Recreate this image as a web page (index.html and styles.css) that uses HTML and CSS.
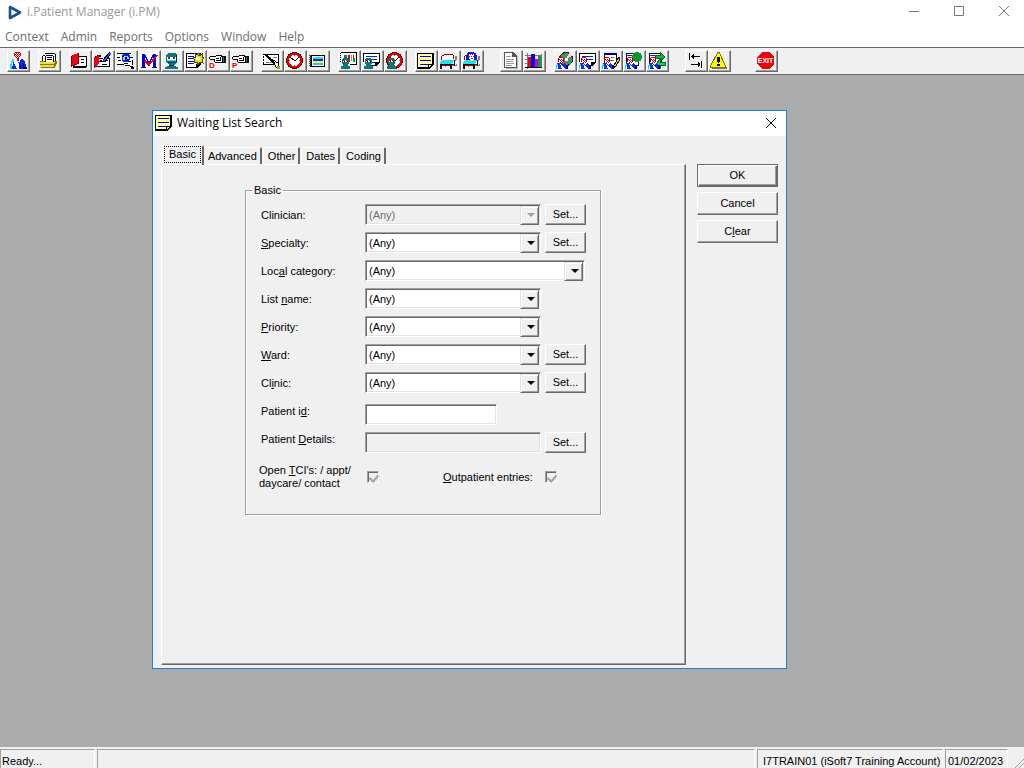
FILE: index.html
```html
<!DOCTYPE html>
<html lang="en">
<head>
<meta charset="utf-8">
<title>i.Patient Manager (i.PM)</title>
<link rel="stylesheet" href="styles.css">
</head>
<body>
<svg class="defs" aria-hidden="true">
  <defs>
    <symbol id="doctor" viewBox="0 0 12 12">
      <path d="M3 0h4v1h1v4H7v1H4V5H3z" fill="#fff"/>
      <path d="M3 0h4v1H3zM3 2h1v1H3zM5 2h1v1H5zM4 3h1v1H4zM6 3h1v1H6zM5 4h1v1H5zM4 5h1v1H4zM6 5h1v1H6z" fill="#e00000"/>
      <path d="M2 1h1v4H2zM7 1h1v4H7z" fill="#a00000"/>
      <path d="M1 6h3l2 2 2-2 3 3v3H1z" fill="#1030f0"/>
      <path d="M4 7h1l4 5H6z" fill="#fff"/>
      <path d="M1 7h1v2H1zM0 8h1v4H0z" fill="#00d8f0"/>
      <path d="M1 9h1v3H1z" fill="#fff"/>
      <path d="M10 8h2v4h-2z" fill="#000080"/>
    </symbol>
    <symbol id="masked" viewBox="0 0 10 11">
      <path d="M2 0h5v1h1v5H7v1H2V6H1V1h1z" fill="#087878"/>
      <path d="M2 2h5v2H2z" fill="#fff"/>
      <path d="M2 2h2v1H2zM5 2h2v1H5z" fill="#e00000"/>
      <path d="M3 3h1v1H3zM6 3h1v1H6z" fill="#000"/>
      <path d="M0 8h2V7h5v1h2v3H0z" fill="#087878"/>
    </symbol>
    <symbol id="hand" viewBox="0 0 18 18">
      <path d="M1 5h6l1-1h6v6H7V8H1z" fill="#fff"/>
      <path d="M0 5h1v2H0zM1 4h6v1H1zM1 7h5v1H1zM7 3h6v1H7zM12 4h2v1h-2zM5 8h1v2H5zM6 10h8v1H6zM7 6h3v1H7zM7 8h4v1H7zM11 5h1v4h-1zM13 5h1v5h-1z" fill="#000"/>
      <path d="M14 4h3v7h-3z" fill="#111"/>
      <path d="M14 5h1v5h-1z" fill="#087878"/>
    </symbol>
    <symbol id="note" viewBox="0 0 18 18">
      <path d="M1 2h15v10l-4 4H1z" fill="#ffffa0"/>
      <path d="M0 1h16v1H0zM0 1h1v15H0zM15 1h2v11h-2zM0 15h11v2H0zM11 12h6l-5 5h-1z" fill="#000"/>
      <path d="M12 13h2l-2 2z" fill="#ffffa0"/>
      <path d="M3 4h11v1H3zM3 8h11v1H3zM3 12h8v1H3z" fill="#0000f0"/>
    </symbol>
    <symbol id="clock" viewBox="0 0 18 18">
      <circle cx="8.5" cy="8.5" r="8.5" fill="#600"/>
      <circle cx="8.5" cy="8.5" r="7.5" fill="#e80000"/>
      <circle cx="8.5" cy="8.5" r="5.6" fill="#fff"/>
      <path d="M4 5l5 4 4-4" fill="none" stroke="#000"/>
      <path d="M8 3h1v1H8zM8 13h1v1H8zM3 8h1v1H3zM13 8h1v1h-1z" fill="#666"/>
    </symbol>
    <symbol id="bed" viewBox="0 0 18 18">
      <path d="M15 4h2v3l-2 2zM3 15l3-1h11v-3l-2 2z" fill="#808080"/>
      <path d="M3 3h11v4l-2 2H2V5z" fill="#fff"/>
      <path d="M4 2h9v1H4zM2 3h2v1H2zM1 4h1v4H1zM13 3h1v4h-1z" fill="#900"/>
      <path d="M2 8h12l-2 4H0v-2z" fill="#20e0e8"/>
      <path d="M0 12h12v1H0zM14 8h1v2h-1zM0 13h2v4H0zM10 13h2v4h-2zM14 10h1v4h-1z" fill="#111"/>
      <path d="M2 13h8v1H2zM12 12h2v1h-2z" fill="#a00000"/>
    </symbol>
  </defs>
</svg>

<div class="app">
  <header class="titlebar">
    <svg class="logo" viewBox="0 0 14 15" aria-hidden="true"><path d="M2 2l10 5.5L2 13z" fill="#fff" stroke="#1c4f91" stroke-width="2.6" stroke-linejoin="round"/></svg>
    <h1 class="app-title">i.Patient Manager (i.PM)</h1>
    <div class="window-controls">
      <button class="control" aria-label="Minimize"><svg viewBox="0 0 12 12"><path d="M1 5.5h10"/></svg></button>
      <button class="control" aria-label="Maximize"><svg viewBox="0 0 12 12"><path d="M1.500 .500h9v9h-9z"/></svg></button>
      <button class="control" aria-label="Close"><svg viewBox="0 0 12 12"><path d="M1 0l10 10M11 0L1 10"/></svg></button>
    </div>
  </header>

  <nav class="menubar">
    <button class="menu">Context</button>
    <button class="menu">Admin</button>
    <button class="menu">Reports</button>
    <button class="menu">Options</button>
    <button class="menu">Window</button>
    <button class="menu">Help</button>
  </nav>

  <div class="toolbar" role="toolbar">
    <div class="group">
      <button class="tool" aria-label="Patient"><svg viewBox="0 0 18 18">
        <path d="M6 0h5v6l-2 2-3-2z" fill="#fff"/>
        <path d="M6 0h5v1H6zM5 1h1v3H5zM11 1h1v3h-1zM7 1h1v1H7zM9 1h1v1H9zM6 2h1v1H6zM8 2h1v1H8zM10 2h1v1h-1zM7 3h1v1H7zM9 3h1v1H9zM6 4h1v1H6zM8 4h1v1H8zM10 4h1v1h-1zM7 5h1v1H7zM9 5h1v1H9z" fill="#d80000"/>
        <path d="M4 7h3l3 4 2-4 3 1 2 5v4H3z" fill="#0828e8"/>
        <path d="M5 7h4v3l1 2v5H8l-3-6z" fill="#fff"/>
        <path d="M8 6h2v3H8z" fill="#d80000"/>
        <path d="M3 7h2v3H3zM2 9h1v3H2zM1 12h2v5H1z" fill="#20d8f0"/>
        <path d="M3 10h1v4H3z" fill="#fff"/><path d="M14 12h1v3h3v2h-4zM11 13h1v4h-1z" fill="#000080"/>
      </svg></button>
    </div>
    <div class="group">
      <button class="tool" aria-label="Print"><svg viewBox="0 0 18 18">
        <path d="M4 2h11v8H2V4h2z" fill="#fff"/>
        <path d="M5 1h10v1H5zM15 2h1v8h-1zM2 4h1v6H2zM3 3h2v1H3zM5 4h1v6H5zM6 3h7v1H6zM13 4h1v6h-1zM7 5h5v1H7zM7 7h5v1H7z" fill="#000"/>
        <path d="M0 9h5v1h9V9h3v3l-2 4H0z" fill="#e8e040"/>
        <path d="M0 9h5v1H0zM14 9h3v3h-1l-1 4H1v-1h13v-4h1v-1h-1zM0 12h14v1H0z" fill="#807c00"/>
      </svg></button>
    </div>
    <div class="group">
      <button class="tool" aria-label="Open record"><svg viewBox="0 0 18 18">
        <path d="M8 4h7v10H8z" fill="#fff"/>
        <path d="M8 4h8v11H2v-1h13V5H8zM10 7h3v1h-3zM10 10h3v1h-3zM2 15h13v1H2z" fill="#000"/>
        <path d="M0 4l7-3v10l-7 4z" fill="#f00018"/>
        <path d="M0 4h1v11H0zM7 1h1v11H7zM1 14l6-3v1l-5 3z" fill="#800000"/>
      </svg></button>
      <button class="tool" aria-label="Edit record"><svg viewBox="0 0 18 18">
        <path d="M6 6h9v9H6z" fill="#fff"/>
        <path d="M6 6h3v1H6zM12 6h4v9H2v-1h13V7h-3zM8 9h3v1H8zM8 12h5v1H8z" fill="#000"/>
        <path d="M0 5l5-2v9l-5 4z" fill="#e80018"/><path d="M5 3h2v2H5zM5 6h2v1H5zM5 9h2v1H5zM0 14h5v1H0zM1 4h1v1H1zM3 3h1v1H3z" fill="#400"/>
        <path d="M16 0l-6 7-1 2 3-1 5-6z" fill="#3458d0"/><path d="M16 0l-7 8M12 8l4-5M6 8l3 2 5-2" fill="none" stroke="#000040"/>
      </svg></button>
      <button class="tool" aria-label="Find"><svg viewBox="0 0 18 18">
        <path d="M0 1h14v12H0z" fill="#fff"/>
        <path d="M0 1h14v1H0zM0 5h3v1H0zM1 8h3v1H1zM0 12h7v1H0zM13 5h3v1h-3z" fill="#000"/>
        <path d="M6 2h6v1h1v6h-1v1H6V9H5V3h1z" fill="#0828d8"/><path d="M7 4h4v1h1v2H8v1H6V5h1z" fill="#9ce"/><path d="M8 5h2v2H8z" fill="#003"/>
        <path d="M7 12l6-4h3v6l-2 1H9z" fill="#fff"/><path d="M7 11h4v1H7zM11 9h3v1h-3zM15 8h1v5h-1zM8 13h5v1H8zM13 14h3v1h-3zM14 15h3v2h-3z" fill="#000"/>
      </svg></button>
      <button class="tool" aria-label="Merge"><svg viewBox="0 0 18 18">
        <path d="M0 0h17v17H0z" fill="#fff"/>
        <path d="M2 2h3v14H2zM13 2h3v14h-3zM5 3h1v3H5zM6 5h1v3H6zM7 7h1v3H7zM8 9h2v2H8zM10 7h1v3h-1zM11 5h1v3h-1zM12 3h1v3h-1zM1 15h5v1H1zM12 15h5v1h-5z" fill="#0000e8"/>
        <path d="M5 9l4 4 8-10" fill="none" stroke="#f00000" stroke-width="1.500"/>
      </svg></button>
      <button class="tool" aria-label="Theatre"><svg viewBox="0 0 18 18">
        <path d="M0 0h17v12H0z" fill="#eee"/>
        <path d="M5 1h7l2 2v7l-3 3H6l-3-3V3z" fill="#087878"/>
        <path d="M4 5h9v3H4z" fill="#fff"/><path d="M5 5h2v1H5zM10 5h2v1h-2z" fill="#e80000"/><path d="M5 6h2v1H5zM10 6h2v1h-2zM5 10h7v1H5z" fill="#0030a0"/>
        <path d="M4 8h9v1H4z" fill="#70c0c0"/><path d="M2 15l4-1v-2h5v2l4 1v2H2z" fill="#087878"/><path d="M6 13h5v1H6zM13 3h1v7h-1z" fill="#033"/>
      </svg></button>
      <button class="tool" aria-label="New entry"><svg viewBox="0 0 18 18">
        <path d="M1 2h13v10l-3 3H1z" fill="#fff"/><path d="M0 1h15v11l-4 4H0zM1 2v13h9v-3h4V2z" fill="#000" fill-rule="evenodd"/>
        <path d="M2 4h6v1H2zM2 6h5v1H2zM2 9h6v1H2zM2 11h6v1H2z" fill="#0000e0"/>
        <path d="M11 1h2v3l3-2v3l2 1-2 2 1 3-3-1-2 3-1-3-3 1 1-3-2-2 3-1-1-3 3 1z" fill="#e8e000" stroke="#4a4600"/><path d="M10 5h4v3h-4z" fill="#fff"/>
      </svg></button>
      <button class="tool" aria-label="Discharge"><svg viewBox="0 0 18 18"><use href="#hand" width="18" height="18"/><text x="0" y="16" class="letter">D</text></svg></button>
      <button class="tool" aria-label="Pre-admit"><svg viewBox="0 0 18 18"><use href="#hand" width="18" height="18"/><text x="0" y="16" class="letter">P</text></svg></button>
    </div>
    <div class="group">
      <button class="tool" aria-label="Letter"><svg viewBox="0 0 18 18">
        <path d="M1 3h14v9H1z" fill="#fff"/><path d="M0 2h16v11H0zM1 3v9h14V3z" fill="#000" fill-rule="evenodd"/>
        <path d="M0 3h1v1H0zM0 6h1v1H0zM0 9h1v1H0z" fill="#fff"/><path d="M3 10h6v1H3zM4 5h4v1H4zM10 5h4v1h-4z" fill="#888"/>
        <path d="M3 3l10 10" fill="none" stroke="#000" stroke-width="2"/><path d="M10 8l5 3 1 4h-3z" fill="#fff" stroke="#000"/><path d="M14 14h3v3h-3z" fill="#a8a800"/>
      </svg></button>
      <button class="tool" aria-label="Clock"><svg viewBox="0 0 18 18"><use href="#clock" width="18" height="18"/></svg></button>
      <button class="tool" aria-label="Notebook"><svg viewBox="0 0 18 18">
        <path d="M1 3h15v12H1z" fill="#000"/><path d="M0 3h2v1H0zM0 5h2v1H0zM0 7h2v1H0zM0 9h2v1H0zM0 11h2v1H0zM0 13h2v1H0z" fill="#555"/>
        <path d="M3 4h12v10H3z" fill="#fff"/><path d="M4 5h10v2H4z" fill="#20e0f0"/><path d="M4 7h10v2H4z" fill="#2020f0"/><path d="M4 9h10v2H4z" fill="#f0f040"/><path d="M4 11h10v2H4z" fill="#20c8f0"/>
      </svg></button>
    </div>
    <div class="group">
      <button class="tool" aria-label="Ward view"><svg viewBox="0 0 18 18">
        <path d="M1 1h15v11H1z" fill="#fff"/><path d="M1 0h16v13h-7v-1h6V1H1zM0 1h1v1H0zM0 3h1v1H0zM0 5h1v1H0zM0 7h1v1H0zM0 9h1v1H0z" fill="#000"/>
        <path d="M4 3h3v3H4z" fill="#087878"/><path d="M8 3h2v7H8z" fill="#e00000"/><path d="M11 3h1v6h-1z" fill="#888"/><path d="M13 6h2v4h-2z" fill="#00a000"/><path d="M13 3h1v3h-1z" fill="#e00000"/>
        <use href="#masked" x="1" y="6" width="10" height="11"/>
      </svg></button>
      <button class="tool" aria-label="Clinician list"><svg viewBox="0 0 18 18">
        <path d="M1 2h15v8l-3 3H1z" fill="#fff"/><path d="M0 1h17v9l-4 4H8v-1h4v-3h4V2H1v8H0z" fill="#000"/><path d="M3 4h11v1H3zM6 7h8v1H6zM8 10h4v1H8z" fill="#0020e0"/>
        <use href="#masked" x="1" y="6" width="10" height="11"/>
      </svg></button>
      <button class="tool" aria-label="Clinician schedule"><svg viewBox="0 0 18 18"><use href="#clock" width="18" height="18"/><use href="#masked" x="1" y="6" width="10" height="11"/></svg></button>
    </div>
    <div class="group">
      <button class="tool" aria-label="Waiting list"><svg viewBox="0 0 18 18"><use href="#note" width="18" height="18"/></svg></button>
      <button class="tool" aria-label="Bed"><svg viewBox="0 0 18 18"><use href="#bed" width="18" height="18"/></svg></button>
      <button class="tool" aria-label="Occupied bed"><svg viewBox="0 0 18 18"><use href="#bed" width="18" height="18"/>
        <path d="M5 0h6v1h2v3h1v4H3V4h1V1h1z" fill="#0820d0"/><path d="M6 2h5v5l-2 2-3-2z" fill="#fff"/><path d="M7 2h1v1H7zM9 2h1v1H9zM6 4h1v1H6zM8 4h1v1H8zM10 4h1v1h-1zM8 6h2v1H8z" fill="#e00000"/></svg></button>
    </div>
    <div class="group group--far">
      <button class="tool" aria-label="Document"><svg viewBox="0 0 18 18">
        <path d="M4 4h12v13H4z" fill="#bbb"/><path d="M2 0h9l4 4v12H2z" fill="#fff"/><path d="M2 0h9l4 4v12H2zM3 1v14h11V5h-4V1z" fill="#555" fill-rule="evenodd"/>
        <path d="M4 4h5v1H4zM4 7h8v1H4zM4 9h7v1H4zM4 11h8v1H4zM4 13h6v1H4z" fill="#999"/>
      </svg></button>
      <button class="tool" aria-label="Chart"><svg viewBox="0 0 18 18">
        <path d="M2 1h1v16H2zM0 3h17v1H0zM0 7h17v1H0zM0 11h17v1H0zM16 2h1v14h-1z" fill="#777"/>
        <path d="M3 5h3v11H3z" fill="#e80000"/><path d="M6 2h4v14H6z" fill="#0000f0"/><path d="M10 7h3v9h-3z" fill="#d000d0"/><path d="M13 4h3v12h-3z" fill="#00a040"/><path d="M0 15h17v1H0z" fill="#000"/>
      </svg></button>
    </div>
    <div class="group">
      <button class="tool" aria-label="Patient disc"><svg viewBox="0 0 18 18">
        <circle cx="10" cy="7" r="6.500" fill="#777" stroke="#222"/><path d="M10 7l-4-5 4-1zM10 7l6 2-2 4z" fill="#10b030"/><path d="M10 7l3-6 3 3z" fill="#ddd"/><path d="M9 6h3v3H9z" fill="#fff"/>
        <use href="#doctor" x="0" y="5" width="12" height="12"/></svg></button>
      <button class="tool" aria-label="Patient note"><svg viewBox="0 0 18 18">
        <path d="M1 2h15v9l-3 2H1z" fill="#fff"/><path d="M0 1h17v9l-4 4h-2v-1h1v-3h4V2H1v8H0z" fill="#000"/><path d="M3 4h11v1H3zM7 7h7v1H7z" fill="#0020e0"/>
        <use href="#doctor" x="0" y="5" width="12" height="12"/></svg></button>
      <button class="tool" aria-label="Edit patient"><svg viewBox="0 0 18 18">
        <path d="M2 1h12v12H2z" fill="#fff" stroke="#111"/><path d="M2 1h12v2H2z" fill="#000080"/><path d="M4 5h3v1H4zM9 5h3v1H9zM8 8h4v1H8z" fill="#666"/>
        <path d="M17 5l-5 8-1 3 3-2 4-7z" fill="#e8d020" stroke="#111"/>
        <use href="#doctor" x="0" y="5" width="12" height="12"/></svg></button>
      <button class="tool" aria-label="Patient network"><svg viewBox="0 0 18 18">
        <path d="M1 1h12v12H1z" fill="#fff" stroke="#111"/><path d="M2 3h6v1H2z" fill="#0020e0"/><circle cx="12" cy="5" r="5" fill="#08a030"/><path d="M9 3h1v1H9zM12 2h1v1h-1zM14 4h1v1h-1zM11 5h1v1h-1zM9 7h1v1H9zM13 7h1v1h-1z" fill="#056020"/>
        <use href="#doctor" x="0" y="5" width="12" height="12"/></svg></button>
      <button class="tool" aria-label="Transfer patient"><svg viewBox="0 0 18 18">
        <path d="M1 1h12v12H1z" fill="#fff" stroke="#111"/><path d="M2 3h6v1H2z" fill="#0020e0"/><path d="M7 3h5V0l5 5-5 4V6H7z" fill="#10c020" stroke="#064"/><path d="M17 10h-5V7l-4 5 4 4v-3h5z" fill="#10e020" stroke="#064"/>
        <use href="#doctor" x="0" y="5" width="12" height="12"/></svg></button>
    </div>
    <div class="group group--far">
      <button class="tool" aria-label="Swap"><svg viewBox="0 0 18 18"><path d="M2 1h1v7H2zM4 4h9v1H4zM5 3h1v3H5zM6 2h1v5H6zM14 9h1v7h-1zM4 12h9v1H4zM12 11h1v3h-1zM11 10h1v5h-1z" fill="#000"/></svg></button>
      <button class="tool" aria-label="Alerts"><svg viewBox="0 0 18 18"><path d="M9 2l8 15H2z" fill="#777"/><path d="M8 0h1l7 15H0z" fill="#ffff00" stroke="#777700"/><path d="M7 5h3v4L9 11H8L7 9zM7 12h3v2H7z" fill="#000"/></svg></button>
    </div>
    <div class="group group--farther">
      <button class="tool" aria-label="Exit"><svg viewBox="0 0 18 18"><path d="M5 0h7l5 5v7l-5 5H5l-5-5V5z" fill="#f00008"/><text x="8.500" y="11" text-anchor="middle" class="exit">EXIT</text></svg></button>
    </div>
  </div>

  <main class="desktop">
    <section class="dialog" role="dialog" aria-labelledby="dialog-title">
      <header class="dialog-head">
        <svg class="dialog-icon" viewBox="0 0 18 18" aria-hidden="true"><use href="#note" width="18" height="18"/></svg>
        <h2 class="dialog-title" id="dialog-title">Waiting List Search</h2>
        <button class="dialog-close" aria-label="Close dialog"><svg viewBox="0 0 12 12"><path d="M1 1l10 10M11 1L1 11"/></svg></button>
      </header>
      <form class="dialog-body">
        <div class="tabs">
          <div class="tablist" role="tablist">
            <button type="button" class="tab tab--active" role="tab" aria-selected="true"><span class="focus">Basic</span></button>
            <button type="button" class="tab" role="tab">Advanced</button>
            <button type="button" class="tab" role="tab">Other</button>
            <button type="button" class="tab" role="tab">Dates</button>
            <button type="button" class="tab" role="tab">Coding</button>
          </div>
          <div class="panel" role="tabpanel">
            <fieldset class="box">
              <legend class="legend">Basic</legend>
              <div class="field">
                <label class="label" for="clinician">Clinician:</label>
                <span class="combo combo--off"><select id="clinician" class="select" disabled><option>(Any)</option></select></span>
                <button type="button" class="push">Set...</button>
              </div>
              <div class="field">
                <label class="label" for="specialty"><u>S</u>pecialty:</label>
                <span class="combo"><select id="specialty" class="select"><option>(Any)</option></select></span>
                <button type="button" class="push">Set...</button>
              </div>
              <div class="field">
                <label class="label" for="category">Loc<u>a</u>l category:</label>
                <span class="combo combo--wide"><select id="category" class="select"><option>(Any)</option></select></span>
              </div>
              <div class="field">
                <label class="label" for="listname">List <u>n</u>ame:</label>
                <span class="combo"><select id="listname" class="select"><option>(Any)</option></select></span>
              </div>
              <div class="field">
                <label class="label" for="priority"><u>P</u>riority:</label>
                <span class="combo"><select id="priority" class="select"><option>(Any)</option></select></span>
              </div>
              <div class="field">
                <label class="label" for="ward"><u>W</u>ard:</label>
                <span class="combo"><select id="ward" class="select"><option>(Any)</option></select></span>
                <button type="button" class="push">Set...</button>
              </div>
              <div class="field">
                <label class="label" for="clinic">Cl<u>i</u>nic:</label>
                <span class="combo"><select id="clinic" class="select"><option>(Any)</option></select></span>
                <button type="button" class="push">Set...</button>
              </div>
              <div class="field field--text field--first">
                <label class="label" for="pid">Patient i<u>d</u>:</label>
                <input id="pid" class="text" type="text">
              </div>
              <div class="field field--text">
                <label class="label" for="details">Patient <u>D</u>etails:</label>
                <input id="details" class="text text--off" type="text" disabled>
                <button type="button" class="push">Set...</button>
              </div>
              <div class="checks">
                <label class="check-label" for="open">Open <u>T</u>CI's: / appt/<br>daycare/ contact</label>
                <input id="open" class="check" type="checkbox" checked disabled>
                <label class="check-label check-label--second" for="outpatient"><u>O</u>utpatient entries:</label>
                <input id="outpatient" class="check" type="checkbox" checked disabled>
              </div>
            </fieldset>
          </div>
        </div>
        <div class="actions">
          <button type="button" class="push push--default">OK</button>
          <button type="button" class="push">Cancel</button>
          <button type="button" class="push">C<u>l</u>ear</button>
        </div>
      </form>
    </section>
  </main>

  <footer class="status">
    <span class="cell cell--ready">Ready...</span>
    <span class="cell cell--grow"></span>
    <span class="cell cell--account">I7TRAIN01 (iSoft7 Training Account)</span>
    <span class="cell cell--date">01/02/2023</span>
    <svg class="grip" viewBox="0 0 14 19" aria-hidden="true"><path d="M5 19l9-9M9 19l5-5" stroke="#999" fill="none"/></svg>
  </footer>
</div>
</body>
</html>
```

FILE: styles.css
```css
* { box-sizing: border-box; }

body {
  margin: 0;
  font: 11px/13px "Liberation Sans", Arial, sans-serif;
  color: #000;
}

button, input, select { font: inherit; color: inherit; }
button { padding: 0; border: 0; background: none; }
.defs { position: absolute; width: 0; height: 0; }

.app {
  display: flex;
  flex-direction: column;
  height: 100vh;
  overflow: hidden;
  background: #f0f0f0;
}

/* Main window */
.titlebar {
  display: flex;
  align-items: center;
  height: 24px;
  padding-left: 8px;
  background: #fff;
}
.logo { width: 14px; height: 15px; }
.app-title {
  flex: 1;
  margin: 0 0 0 5px;
  font: 12px/16px "Open Sans", sans-serif;
  color: #999;
}
.window-controls { display: flex; padding-right: 14px; gap: 33px; }
.control { width: 12px; height: 12px; }
.control svg { display: block; fill: none; stroke: #777; }

.menubar {
  display: flex;
  gap: 12px;
  height: 23px;
  padding: 4px 5px 0;
  background: #fff;
}
.menu {
  height: 17px;
  font: 12px/17px "Open Sans", sans-serif;
  color: #6d6d6d;
}

.toolbar {
  display: flex;
  gap: 8px;
  height: 28px;
  padding: 2px 7px;
  border-top: 1px solid #696969;
  border-bottom: 1px solid #696969;
}
.group { display: flex; }
.group--far { margin-left: 8px; }
.group--farther { margin-left: 16px; }
.tool {
  width: 23px;
  height: 22px;
  padding: 1px;
  border: 1px solid;
  border-color: #fff #696969 #696969 #fff;
  box-shadow: inset -1px -1px #a0a0a0;
}
.tool svg { display: block; width: 18px; height: 18px; shape-rendering: crispEdges; }
.letter { font: bold 8px "Liberation Sans", sans-serif; fill: #e80000; }
.exit { font: bold 7px "Liberation Sans", sans-serif; fill: #fff; }

.desktop { position: relative; flex: 1; background: #ababab; }

/* Dialog */
.dialog {
  position: absolute;
  top: 35px;
  left: 152px;
  width: 635px;
  border: 1px solid #1883d7;
  background: #f0f0f0;
}
.dialog-head {
  display: flex;
  align-items: center;
  height: 25px;
  padding: 0 9px 2px 2px;
  background: #fff;
}
.dialog-icon { width: 18px; height: 18px; shape-rendering: crispEdges; }
.dialog-title {
  flex: 1;
  margin: 0 0 0 4px;
  font: 12px/16px "Open Sans", sans-serif;
}
.dialog-close { width: 12px; height: 12px; }
.dialog-close svg { display: block; fill: none; stroke: #000; }
.dialog-body { display: flex; gap: 11px; padding: 9px 8px 3px; }

.tabs { flex: 1; }
.tablist { display: flex; align-items: flex-end; gap: 1px; height: 19px; padding-left: 1px; }
.tab {
  height: 17px;
  padding: 0 3px 0 4px;
  border: solid;
  border-width: 1px 2px 0 1px;
  border-color: #fff #696969 #fff #fff;
  border-radius: 2px 2px 0 0;
}
.tab--active {
  position: relative;
  height: 20px;
  margin: 0 -2px -1px 0;
  padding: 0 1px 2px;
  background: #f0f0f0;
}
.focus { display: block; padding: 0 4px 1px; border: 1px dotted #000; line-height: 14px; }
.panel {
  min-height: 501px;
  padding: 19px 84px 0 83px;
  border: 1px solid;
  border-color: #fff #696969 #696969 #fff;
  box-shadow: inset -1px -1px #a0a0a0;
}

.box {
  min-width: 0;
  min-height: 331px;
  margin: 0;
  padding: 7px 13px 0;
  border: 1px solid #a0a0a0;
  box-shadow: 1px 1px #fff, inset 1px 1px #fff;
}
.legend { margin-left: -7px; padding: 0 2px; background: #f0f0f0; }

.field { display: flex; gap: 4px; height: 28px; padding-left: 2px; }
.field--first { margin-top: 4px; }
.label { width: 100px; line-height: 22px; }
.field--text .label { line-height: 15px; }

.combo, .text {
  width: 176px;
  height: 21px;
  border: 1px solid;
  border-color: #a0a0a0 #fff #fff #a0a0a0;
  background: #fff;
  box-shadow: inset 1px 1px #696969, inset -1px -1px #e3e3e3;
}
.combo { position: relative; padding: 1px; }
.combo--wide { width: 220px; }
.combo--off { background: #f0f0f0; color: #6d6d6d; }
.select {
  display: block;
  width: 100%;
  height: 17px;
  padding: 1px 18px 0 2px;
  border: 0;
  border-radius: 0;
  appearance: none;
  background: none;
  opacity: 1;
}
.combo::before {
  content: "";
  position: absolute;
  top: 1px;
  right: 1px;
  width: 17px;
  height: 17px;
  border: 1px solid;
  border-color: #e3e3e3 #696969 #696969 #e3e3e3;
  background: #f0f0f0;
  box-shadow: inset 1px 1px #fff, inset -1px -1px #a0a0a0;
  pointer-events: none;
}
.combo::after {
  content: "";
  position: absolute;
  top: 8px;
  right: 5px;
  border: solid transparent;
  border-width: 4px 4px 0;
  border-top-color: #000;
  pointer-events: none;
}
.combo--off::after { border-top-color: #a0a0a0; }
.text { width: 132px; padding: 0 3px; }
.text--off { width: 176px; background: #f0f0f0; }

.push {
  width: 41px;
  height: 21px;
  border: 1px solid;
  border-color: #fff #696969 #696969 #fff;
  box-shadow: inset -1px -1px #a0a0a0;
}

.checks { display: flex; align-items: center; padding-top: 4px; }
.check-label { width: 108px; }
.check-label--second { width: 102px; margin-left: 64px; }
.check {
  position: relative;
  width: 12px;
  height: 12px;
  margin: 0;
  appearance: none;
  border: 1px solid;
  border-color: #a0a0a0 #fff #fff #a0a0a0;
  box-shadow: inset 1px 1px #696969, inset -1px -1px #e3e3e3;
}
.check:checked::after {
  content: "";
  position: absolute;
  top: 1px;
  left: 3px;
  width: 4px;
  height: 7px;
  border: solid #a0a0a0;
  border-width: 0 2px 2px 0;
  transform: rotate(42deg);
}

.actions { display: flex; flex-direction: column; gap: 5px; width: 81px; padding-top: 19px; }
.actions .push { width: 100%; height: 23px; }
.actions .push--default {
  border-color: #696969;
  box-shadow: inset 1px 1px #fff, inset -1px -1px #696969, inset -2px -2px #a0a0a0;
}

/* Status bar */
.status {
  display: flex;
  gap: 2px;
  height: 21px;
  padding-top: 2px;
  background: #f0f0f0;
}
.cell {
  padding: 5px 0 0 5px;
  border: solid;
  border-width: 1px 1px 0;
  border-color: #a0a0a0 #fff #fff #a0a0a0;
  white-space: nowrap;
}
.cell--ready { width: 95px; padding-left: 1px; }
.cell--grow { flex: 1; }
.cell--account { width: 186px; }
.cell--date { width: 63px; padding-left: 2px; }
.grip { width: 14px; height: 19px; }
```
